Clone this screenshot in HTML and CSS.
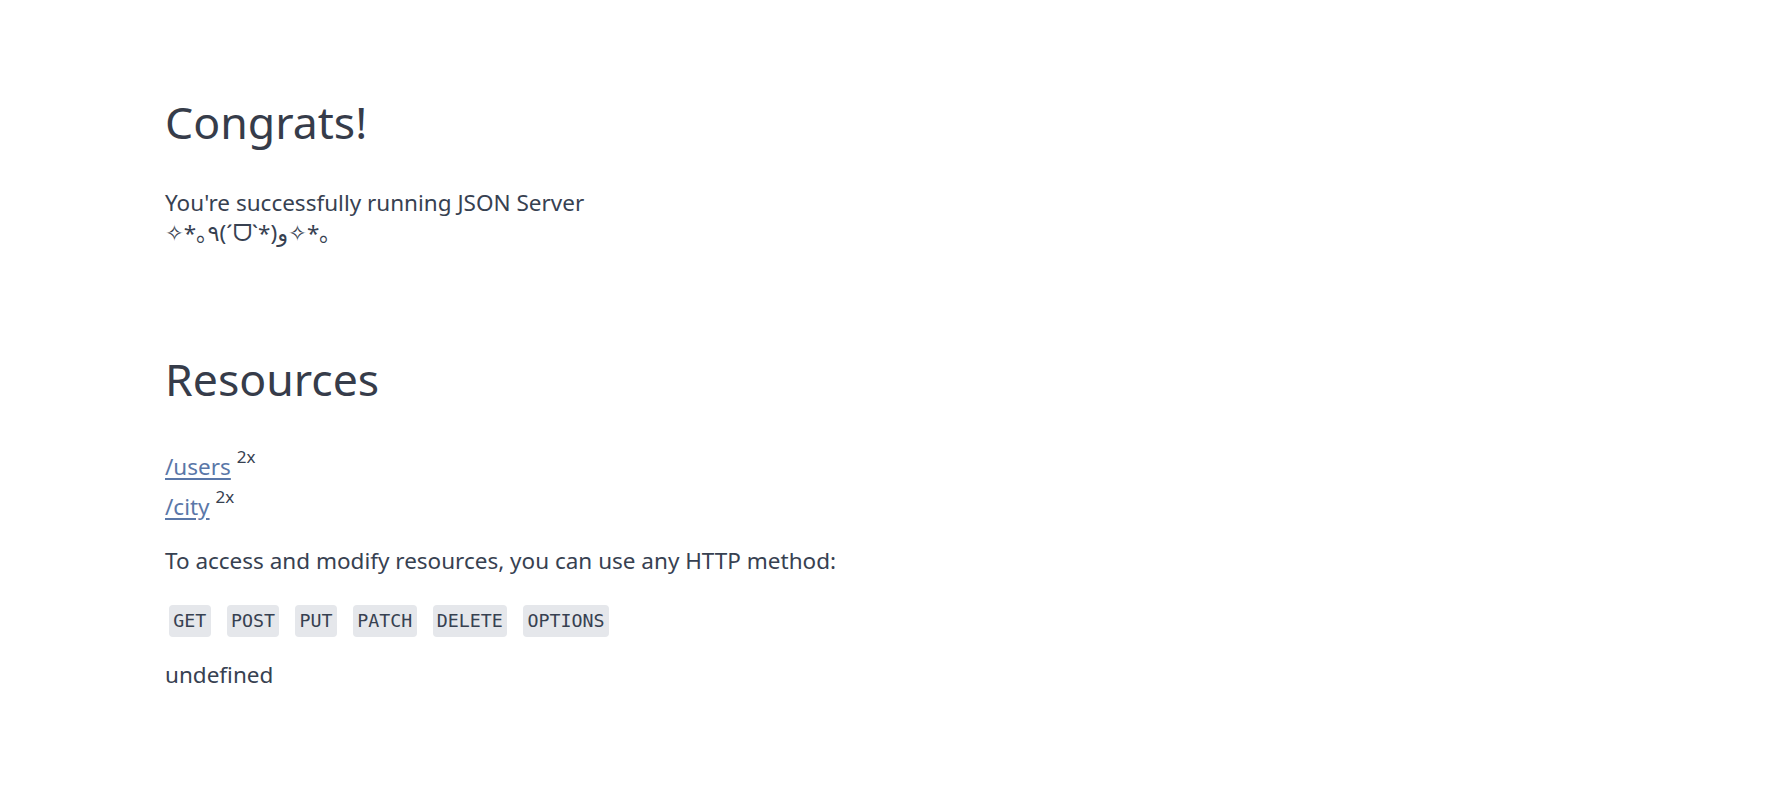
FILE: index.html
```html
<!DOCTYPE html>
<html lang="en">
<head>
<meta charset="utf-8">
<title>JSON Server</title>
<link rel="stylesheet" href="styles.css">
</head>
<body>
<main class="page">
  <h1 class="title first">Congrats!</h1>
  <p class="intro">You're successfully running JSON Server<br>✧*｡٩(ˊᗜˋ*)و✧*｡</p>

  <h1 class="title second">Resources</h1>
  <ul class="resources">
    <li class="resource"><a class="link" href="#users">/users</a> <sup class="count">2x</sup></li>
    <li class="resource"><a class="link" href="#city">/city</a> <sup class="count">2x</sup></li>
  </ul>
  <p class="info">To access and modify resources, you can use any HTTP method:</p>
  <div class="methods">
    <code class="method">GET</code>
    <code class="method">POST</code>
    <code class="method">PUT</code>
    <code class="method">PATCH</code>
    <code class="method">DELETE</code>
    <code class="method">OPTIONS</code>
  </div>
  <p class="footer-note">undefined</p>
</main>
</body>
</html>
```

FILE: styles.css
```css
html, body {
  margin: 0;
  padding: 0;
  background: #ffffff;
}

body {
  font-family: "Noto Sans", "DejaVu Sans", "Noto Sans CJK JP", sans-serif;
  font-size: 22.5px;
  line-height: 30px;
  color: #374151;
}

.page {
  display: flow-root;
  padding: 94.6px 0 0 165px;
}

.title {
  margin: 0;
  font-size: 44.6px;
  line-height: 54px;
  font-weight: 400;
  color: #363c4a;
}

.intro {
  margin: 39.7px 0 0;
}

.second {
  margin-top: 103.3px;
}

.resources {
  list-style: none;
  margin: 42.2px 0 0;
  padding: 0;
}

.resource {
  line-height: 37px;
}

.resource + .resource {
  margin-top: 3.4px;
}

.link {
  color: #5a77a8;
  text-decoration: underline;
  text-underline-offset: 3px;
}

.count {
  font-size: 17px;
  line-height: 0;
  vertical-align: 12px;
  color: #374151;
}

.info {
  margin: 21.1px 0 0;
}

.methods {
  display: flex;
  gap: 16px;
  margin-top: 28.7px;
  padding-left: 4px;
}

.method {
  display: block;
  height: 32px;
  padding: 0 4.3px;
  font-family: "DejaVu Sans Mono", "Liberation Mono", monospace;
  font-size: 18.3px;
  line-height: 32px;
  background: #e5e7eb;
  border-radius: 4px;
  color: #374151;
}

.footer-note {
  margin: 22.7px 0 0;
}
```
